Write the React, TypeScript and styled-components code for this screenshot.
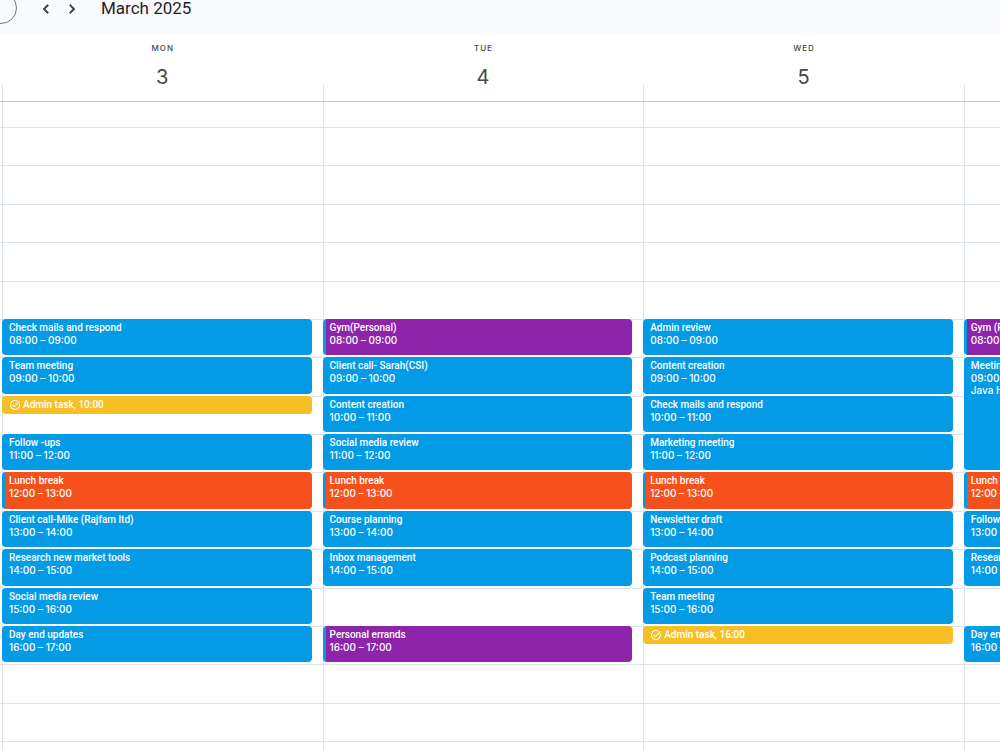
import React from "react";
import styled, { createGlobalStyle, css } from "styled-components";
import { MdChevronLeft, MdChevronRight, MdTaskAlt } from "react-icons/md";

const GlobalStyle = createGlobalStyle`
  *, *::before, *::after { box-sizing: border-box; }
  body {
    margin: 0;
    background: #ffffff;
    font-family: Inter, "Liberation Sans", sans-serif;
    overflow: hidden;
  }
  button { font: inherit; color: inherit; border: 0; padding: 0; cursor: pointer; }
`;

const colors = {
  blue: "#039be5",
  purple: "#8e24aa",
  orange: "#f6511d",
  yellow: "#f6bf26",
  line: "#dde3ea",
  strong: "#c4c7c5",
};

const headingFont = `Roboto, "Liberation Sans", sans-serif`;

type Tone = "blue" | "purple" | "orange" | "yellow";

interface CalendarEvent {
  title: string;
  start: number;
  end: number;
  tone?: Tone;
  task?: boolean;
  place?: string;
}

interface Day {
  key: string;
  heading?: { name: string; date: number };
  events: CalendarEvent[];
}

const FIRST_HOUR = 3;

const days: Day[] = [
  {
    key: "2025-03-03",
    heading: { name: "MON", date: 3 },
    events: [
      { title: "Check mails and respond", start: 8, end: 9 },
      { title: "Team meeting", start: 9, end: 10 },
      { title: "Admin task", start: 10, end: 11, tone: "yellow", task: true },
      { title: "Follow -ups", start: 11, end: 12 },
      { title: "Lunch break", start: 12, end: 13, tone: "orange" },
      { title: "Client call-Mike (Rajfam ltd)", start: 13, end: 14 },
      { title: "Research new market tools", start: 14, end: 15 },
      { title: "Social media review", start: 15, end: 16 },
      { title: "Day end updates", start: 16, end: 17 },
    ],
  },
  {
    key: "2025-03-04",
    heading: { name: "TUE", date: 4 },
    events: [
      { title: "Gym(Personal)", start: 8, end: 9, tone: "purple" },
      { title: "Client call- Sarah(CSI)", start: 9, end: 10 },
      { title: "Content creation", start: 10, end: 11 },
      { title: "Social media review", start: 11, end: 12 },
      { title: "Lunch break", start: 12, end: 13, tone: "orange" },
      { title: "Course planning", start: 13, end: 14 },
      { title: "Inbox management", start: 14, end: 15 },
      { title: "Personal errands", start: 16, end: 17, tone: "purple" },
    ],
  },
  {
    key: "2025-03-05",
    heading: { name: "WED", date: 5 },
    events: [
      { title: "Admin review", start: 8, end: 9 },
      { title: "Content creation", start: 9, end: 10 },
      { title: "Check mails and respond", start: 10, end: 11 },
      { title: "Marketing meeting", start: 11, end: 12 },
      { title: "Lunch break", start: 12, end: 13, tone: "orange" },
      { title: "Newsletter draft", start: 13, end: 14 },
      { title: "Podcast planning", start: 14, end: 15 },
      { title: "Team meeting", start: 15, end: 16 },
      { title: "Admin task", start: 16, end: 17, tone: "yellow", task: true },
    ],
  },
  {
    key: "2025-03-06",
    events: [
      { title: "Gym (Personal)", start: 8, end: 9, tone: "purple" },
      { title: "Meeting", start: 9, end: 12, place: "Java House" },
      { title: "Lunch break", start: 12, end: 13, tone: "orange" },
      { title: "Follow -ups", start: 13, end: 14 },
      { title: "Research new market tools", start: 14, end: 15 },
      { title: "Day end updates", start: 16, end: 17 },
    ],
  },
];

const Page = styled.div`
  overflow: hidden;
`;

const Toolbar = styled.header`
  display: flex;
  align-items: flex-start;
  height: 33px;
  background: #f8fafd;
  color: #1f1f1f;
`;

const TodayButton = styled.button`
  width: 60px;
  height: 32px;
  margin: -8px 20px 0 -43px;
  border: 1px solid #747775;
  border-radius: 16px;
  background: transparent;
`;

const NavButton = styled.button`
  display: flex;
  margin-right: 8px;
  background: transparent;
  color: #444746;

  svg {
    width: 18px;
    height: 18px;
  }

  path:last-child {
    stroke: currentColor;
    stroke-width: 1;
  }
`;

const Month = styled.h1`
  margin: 0 0 0 12px;
  font-family: ${headingFont};
  font-size: 17px;
  line-height: 17px;
  font-weight: 400;
`;

const weekColumns = css`
  display: grid;
  grid-template-columns: 2px repeat(4, 32.06%);
`;

const WeekHeader = styled.div`
  ${weekColumns}
  height: 69px;
  border-bottom: 1px solid ${colors.strong};
`;

const DayHeading = styled.h2`
  display: flex;
  flex-direction: column;
  align-items: center;
  margin: 0;
  padding-top: 10px;
  font-weight: 400;
  color: #444746;
  background: linear-gradient(${colors.line}, ${colors.line}) left bottom / 1px 16px no-repeat;
`;

const DayName = styled.span`
  padding-left: 1px;
  font-size: 8px;
  line-height: 10px;
  font-weight: 500;
  letter-spacing: 1px;
`;

const DayNumber = styled.span`
  margin-top: 12px;
  font-size: 20px;
  line-height: 24px;
`;

const WeekBody = styled.main`
  ${weekColumns}
`;

const DayColumn = styled.div<{ $edge?: boolean }>`
  display: grid;
  grid-template-columns: minmax(0, 1fr);
  grid-template-rows: 25px repeat(16, minmax(0, 1fr)) 9px;
  height: 648px;
  border-left: ${(p) => (p.$edge ? "0" : `1px solid ${colors.line}`)};
`;

const HourCell = styled.div<{ $row: number }>`
  grid-area: ${(p) => p.$row} / 1;
  border-top: 1px solid ${colors.line};
`;

const EventCard = styled.button<{ $tone: Tone; $from: number; $to: number; $task?: boolean }>`
  grid-column: 1;
  grid-row: ${(p) => p.$from} / ${(p) => p.$to};
  align-self: ${(p) => (p.$task ? "start" : "stretch")};
  display: flex;
  flex-direction: ${(p) => (p.$task ? "row" : "column")};
  align-items: ${(p) => (p.$task ? "center" : "flex-start")};
  gap: ${(p) => (p.$task ? "2px" : "0")};
  height: ${(p) => (p.$task ? "18px" : "auto")};
  margin: 0 11px 2px -1px;
  padding: ${(p) => (p.$task ? "0 7px" : "3px 7px 0")};
  border-radius: 4px;
  overflow: hidden;
  color: #ffffff;
  font-size: 10px;
  line-height: 12px;
  text-align: left;
  white-space: nowrap;
  background: ${(p) =>
    p.$tone === "purple" || p.$tone === "orange"
      ? `linear-gradient(to right, ${colors.blue} 3px, ${colors[p.$tone]} 3px)`
      : colors[p.$tone]};

  svg {
    flex: none;
    width: 12px;
    height: 12px;
  }
`;

const EventTitle = styled.span`
  font-family: ${headingFont};
  font-weight: 500;
`;

const EventDetail = styled.span`
  font-weight: 500;
`;

const clock = (hour: number) => `${String(hour).padStart(2, "0")}:00`;
const rowOf = (hour: number) => hour - FIRST_HOUR + 2;
const hourRows = Array.from({ length: 17 }, (_, i) => i + 2);

function EventItem({ event }: { event: CalendarEvent }) {
  const { title, start, end, tone = "blue", task, place } = event;
  return (
    <EventCard type="button" $tone={tone} $from={rowOf(start)} $to={rowOf(end)} $task={task}>
      {task ? (
        <>
          <MdTaskAlt aria-hidden />
          <EventTitle>{`${title}, ${clock(start)}`}</EventTitle>
        </>
      ) : (
        <>
          <EventTitle>{title}</EventTitle>
          <EventDetail>{`${clock(start)} – ${clock(end)}`}</EventDetail>
          {place && <EventDetail>{place}</EventDetail>}
        </>
      )}
    </EventCard>
  );
}

export default function App() {
  return (
    <Page>
      <GlobalStyle />
      <Toolbar>
        <TodayButton type="button" aria-label="Today" />
        <NavButton type="button" aria-label="Previous week">
          <MdChevronLeft />
        </NavButton>
        <NavButton type="button" aria-label="Next week">
          <MdChevronRight />
        </NavButton>
        <Month>March 2025</Month>
      </Toolbar>
      <WeekHeader>
        <span />
        {days.map((day) => (
          <DayHeading key={day.key}>
            {day.heading && (
              <>
                <DayName>{day.heading.name}</DayName>
                <DayNumber>{day.heading.date}</DayNumber>
              </>
            )}
          </DayHeading>
        ))}
      </WeekHeader>
      <WeekBody>
        <DayColumn $edge>
          {hourRows.map((row) => (
            <HourCell key={row} $row={row} />
          ))}
        </DayColumn>
        {days.map((day) => (
          <DayColumn key={day.key}>
            {hourRows.map((row) => (
              <HourCell key={row} $row={row} />
            ))}
            {day.events.map((event) => (
              <EventItem key={event.start} event={event} />
            ))}
          </DayColumn>
        ))}
      </WeekBody>
    </Page>
  );
}
